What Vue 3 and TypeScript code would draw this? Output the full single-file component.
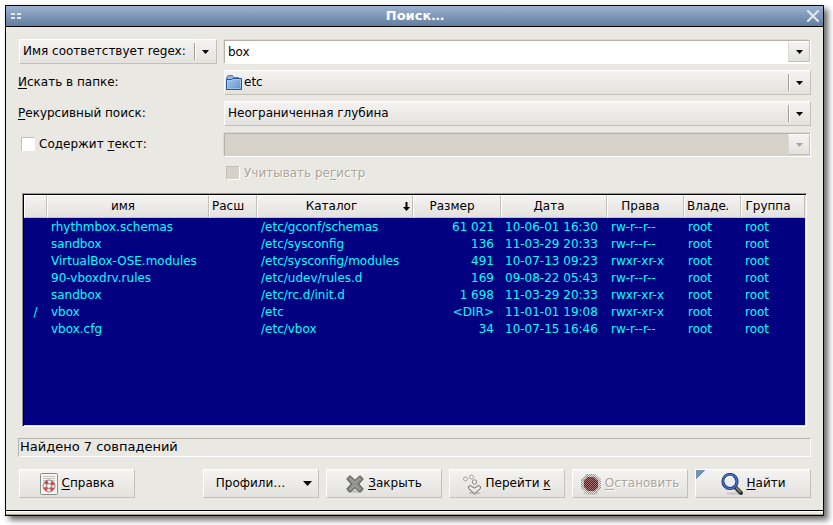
<script setup lang="ts">
import { ref } from 'vue'

interface FoundFile {
  mark: string
  name: string
  ext: string
  dir: string
  size: string
  date: string
  rights: string
  owner: string
  group: string
}

interface Column {
  id: keyof FoundFile
  title: string
  sorted?: boolean
}

const columns: Column[] = [
  { id: 'mark', title: '' },
  { id: 'name', title: 'имя' },
  { id: 'ext', title: 'Расш' },
  { id: 'dir', title: 'Каталог', sorted: true },
  { id: 'size', title: 'Размер' },
  { id: 'date', title: 'Дата' },
  { id: 'rights', title: 'Права' },
  { id: 'owner', title: 'Владел' },
  { id: 'group', title: 'Группа' },
]

const file = (mark: string, name: string, dir: string, size: string, date: string, rights: string): FoundFile => ({
  mark, name, ext: '', dir, size, date, rights, owner: 'root', group: 'root',
})

const files: FoundFile[] = [
  file('', 'rhythmbox.schemas', '/etc/gconf/schemas', '61 021', '10-06-01 16:30', 'rw-r--r--'),
  file('', 'sandbox', '/etc/sysconfig', '136', '11-03-29 20:33', 'rw-r--r--'),
  file('', 'VirtualBox-OSE.modules', '/etc/sysconfig/modules', '491', '10-07-13 09:23', 'rwxr-xr-x'),
  file('', '90-vboxdrv.rules', '/etc/udev/rules.d', '169', '09-08-22 05:43', 'rw-r--r--'),
  file('', 'sandbox', '/etc/rc.d/init.d', '1 698', '11-03-29 20:33', 'rwxr-xr-x'),
  file('/', 'vbox', '/etc', '<DIR>', '11-01-01 19:08', 'rwxr-xr-x'),
  file('', 'vbox.cfg', '/etc/vbox', '34', '10-07-15 16:46', 'rw-r--r--'),
]

const pattern = ref('box')
const containsText = ref(false)
const matchCase = ref(false)
const text = ref('')
</script>

<template>
  <main class="window">
    <header class="titlebar">
      <svg class="menu-glyph" width="10" height="6" viewBox="0 0 10 6" aria-hidden="true">
        <path d="M0 0h4v2H0zM6 0h4v2H6zM0 4h4v2H0zM6 4h4v2H6z" fill="#dfe7f1" />
      </svg>
      <h1>Поиск…</h1>
      <button class="close" type="button" aria-label="Закрыть окно">
        <svg width="12" height="12" viewBox="0 0 12 12">
          <path d="M1 1l10 10M11 1L1 11" stroke="#e3eaf3" stroke-width="2" stroke-linecap="square" />
        </svg>
      </button>
    </header>

    <form class="body" @submit.prevent>
      <div class="fields">
        <div class="combo">
          <select aria-label="Способ сравнения имени">
            <option>Имя соответствует regex:</option>
          </select>
          <span class="divider"></span>
          <svg class="arrow" width="7" height="4" viewBox="0 0 7 4"><path d="M0 0h7L3.5 4z" /></svg>
        </div>
        <div class="entry">
          <input v-model="pattern" type="text" aria-label="Шаблон имени" />
          <button type="button" aria-label="История шаблонов">
            <svg width="7" height="4" viewBox="0 0 7 4"><path d="M0 0h7L3.5 4z" /></svg>
          </button>
        </div>

        <label for="folder"><u>И</u>скать в папке:</label>
        <div class="combo folder">
          <select id="folder"><option>etc</option></select>
          <svg class="folder-icon" width="16" height="16" viewBox="0 0 16 16">
            <defs>
              <linearGradient id="folderFill" x1="0" y1="0" x2="1" y2="1">
                <stop offset="0" stop-color="#a9c8ea" />
                <stop offset="1" stop-color="#5f94cf" />
              </linearGradient>
            </defs>
            <path d="M.5 13.5V3L2 .5h4.500L8 2.500h4.500V5" fill="#8fb4de" stroke="#5280b5" />
            <path d="M.5 14.500V4.500h5l1.500-1h8.500v11z" fill="url(#folderFill)" stroke="#24559a" />
            <path d="M1.500 13.500v-8H6l1.500-1h7v9z" fill="none" stroke="#c2daf3" stroke-opacity=".5" />
          </svg>
          <span class="divider"></span>
          <svg class="arrow" width="7" height="4" viewBox="0 0 7 4"><path d="M0 0h7L3.500 4z" /></svg>
        </div>

        <label for="depth"><u>Р</u>екурсивный поиск:</label>
        <div class="combo">
          <select id="depth"><option>Неограниченная глубина</option></select>
          <span class="divider"></span>
          <svg class="arrow" width="7" height="4" viewBox="0 0 7 4"><path d="M0 0h7L3.500 4z" /></svg>
        </div>

        <label class="check"><input v-model="containsText" type="checkbox" /><span>Содержит <u>т</u>екст:</span></label>
        <div class="entry off">
          <input v-model="text" type="text" aria-label="Искомый текст" disabled />
          <button type="button" aria-label="История текста" disabled>
            <svg width="7" height="4" viewBox="0 0 7 4"><path d="M0 0h7L3.500 4z" /></svg>
          </button>
        </div>
      </div>

      <label class="check case off"><input v-model="matchCase" type="checkbox" disabled /><span>Учитывать ре<u>г</u>истр</span></label>

      <div class="results">
        <table>
          <colgroup>
            <col v-for="c in columns" :key="c.id" :class="'w-' + c.id" />
          </colgroup>
          <thead>
            <tr>
              <th v-for="c in columns" :key="c.id" scope="col">
                <button type="button" :class="'h-' + c.id" :aria-label="c.title ? undefined : 'Тип'">
                  <span class="caption">{{ c.title }}</span>
                  <svg v-if="c.sorted" width="7" height="9" viewBox="0 0 7 9">
                    <path d="M2.500 0h2v5H7L3.500 9 0 5h2.500z" />
                  </svg>
                </button>
              </th>
            </tr>
          </thead>
          <tbody>
            <tr v-for="(f, i) in files" :key="i">
              <td v-for="c in columns" :key="c.id" :class="'c-' + c.id">{{ f[c.id] }}</td>
            </tr>
          </tbody>
        </table>
      </div>

      <output class="status">Найдено 7 совпадений</output>

      <div class="actions">
        <button class="push help" type="button">
          <svg width="18" height="22" viewBox="0 0 18 22">
            <rect x=".5" y=".5" width="17" height="21" rx="1" fill="#f5f5f3" stroke="#8a8c88" />
            <path d="M3 3.500h12M3 5.500h12M3 7.500h4M11 7.500h4" stroke="#c2c3bf" />
            <circle cx="9" cy="13" r="4.200" fill="none" stroke="#ededeb" stroke-width="3.600" />
            <circle cx="9" cy="13" r="4.200" fill="none" stroke="#e04545" stroke-width="3.400" stroke-dasharray="3.300 3.300" stroke-dashoffset="-1.650" />
            <circle cx="9" cy="13" r="6" fill="none" stroke="#8f7a78" stroke-width=".9" />
            <circle cx="9" cy="13" r="2.400" fill="#fff" stroke="#8f6a68" stroke-width=".9" />
          </svg>
          <span><u>С</u>правка</span>
        </button>

        <button class="push profiles" type="button">
          <span>Профили…</span>
          <svg width="9" height="5" viewBox="0 0 9 5"><path d="M0 0h9L4.500 5z" /></svg>
        </button>

        <button class="push" type="button">
          <svg width="18" height="18" viewBox="0 0 18 18">
            <ellipse cx="9" cy="16.500" rx="8" ry="1.500" fill="#000" fill-opacity=".15" />
            <path d="M4 1L9 5.500 14 1l3 3-4.500 5 4.500 5-3 3-5-4.500L4 17l-3-3 4.500-5L1 4z" fill="#8f918c" stroke="#666964" stroke-width="1.200" stroke-linejoin="round" />
            <path d="M4 3l5 4.500L14 3M4 15l5-4.500 5 4.500" fill="none" stroke="#acaeaa" stroke-width=".8" />
          </svg>
          <span><u>З</u>акрыть</span>
        </button>

        <button class="push" type="button">
          <svg width="18" height="22" viewBox="1 0 18 22">
            <ellipse cx="12.500" cy="20" rx="6" ry="1.500" fill="#000" fill-opacity=".16" />
            <g fill="#f3f3f1" stroke="#a4a6a2">
              <circle cx="3.500" cy="6" r="2" />
              <circle cx="9.500" cy="4" r="2" />
              <circle cx="12.500" cy="9" r="2.200" stroke="#858783" />
              <path d="M6.500 13.500L8.500 12.500l4 2.500 4-2.500 2 1v2l-6 5.500-6-5.500z" stroke="#70736e" stroke-linejoin="round" fill="#dcddda" />
              <path d="M8 14.500l4.500 3 4.500-3" fill="none" stroke="#fff" />
            </g>
          </svg>
          <span>Перейти <u>к</u></span>
        </button>

        <button class="push off" type="button" disabled>
          <svg width="20" height="22" viewBox="0 0 20 22">
            <defs>
              <pattern id="stipple" width="2" height="2" patternUnits="userSpaceOnUse">
                <path d="M0 0h1v1H0zM1 1h1v1H1z" fill="#eceae6" />
              </pattern>
              <pattern id="stippleDark" width="2" height="2" patternUnits="userSpaceOnUse">
                <path d="M0 0h1v1H0zM1 1h1v1H1z" fill="#a8a4a0" />
              </pattern>
            </defs>
            <ellipse cx="10" cy="20.500" rx="8" ry="1.500" fill="#000" fill-opacity=".12" />
            <path d="M6 1h8l6 6v8l-6 6H6l-6-6V7z" fill="#8d8f8b" />
            <path d="M6 1h8l6 6v8l-6 6H6l-6-6V7z" fill="url(#stipple)" />
            <path d="M7 4h6l4 4v6l-4 4H7l-4-4V8z" fill="#9a0012" />
            <path d="M7 4h6l4 4v6l-4 4H7l-4-4V8z" fill="url(#stippleDark)" fill-opacity=".7" />
          </svg>
          <span><u>О</u>становить</span>
        </button>

        <button class="push default" type="submit">
          <svg width="22" height="22" viewBox="0 0 22 22">
            <ellipse cx="13" cy="20.500" rx="8" ry="1.300" fill="#000" fill-opacity=".12" />
            <path d="M14.500 14.500l5.500 5.500" stroke="#343632" stroke-width="4" stroke-linecap="round" />
            <path d="M14.500 14l5 5" stroke="#8e918b" stroke-width="1.200" />
            <circle cx="9" cy="8.500" r="7" fill="#e6edf7" stroke="#1f3574" stroke-width="3.200" />
            <circle cx="9" cy="8.500" r="7" fill="none" stroke="#4f72c4" stroke-width="1.400" />
            <path d="M4.500 9a4.500 4.500 0 0 1 7-4.500" fill="none" stroke="#fff" stroke-width="1.800" />
          </svg>
          <span><u>Н</u>айти</span>
        </button>
      </div>
    </form>
    <div class="grip"></div>
  </main>
</template>

<style>
body {
  background: #fff;
}
</style>

<style scoped>
.window,
.window * {
  box-sizing: border-box;
}
.window {
  display: flex;
  flex-direction: column;
  min-height: calc(100vh - 14px);
  margin: 5px 9px 9px 5px;
  border: 1px solid #000;
  background: #e9e8e3;
  box-shadow: 4px 4px 6px rgba(0, 0, 0, 0.6);
  color: #000;
  font: 12px/17px "DejaVu Sans", sans-serif;
}
button,
input,
select {
  margin: 0;
  border-radius: 0;
  color: inherit;
  font: inherit;
}
u {
  text-underline-offset: 2px;
  text-decoration-thickness: 1px;
}
svg {
  display: block;
  flex: none;
}

.titlebar {
  display: grid;
  grid-template-columns: 1fr auto 1fr;
  align-items: center;
  height: 21px;
  padding: 0 4px 0 5px;
  border-bottom: 1px solid #000;
  background: linear-gradient(#9db3cf, #627d9f);
}
h1 {
  margin: 0;
  color: #fff;
  font-size: 13px;
  line-height: 18px;
}
.close {
  justify-self: end;
  padding: 0;
  border: 0;
  background: none;
}

.body {
  display: flex;
  flex: 1;
  flex-direction: column;
  padding: 12px;
}
.fields {
  display: grid;
  grid-template-columns: 199px 1fr;
  grid-auto-rows: 25px;
  align-items: center;
  gap: 6px;
}
.combo,
.entry {
  display: grid;
  align-items: center;
  height: 25px;
}
.combo {
  grid-template-columns: 1fr 1px 21px;
  margin-left: 1px;
  border: 1px solid;
  border-color: #fff #c3c0b8 #c3c0b8 #fff;
  background: linear-gradient(#f4f3f2, #e4e2de);
}
.combo > * {
  grid-row: 1;
  pointer-events: none;
}
.combo select {
  grid-column: 1 / -1;
  width: 100%;
  height: 23px;
  padding: 0 3px;
  border: 0;
  background: none;
  appearance: none;
  outline: 0;
  pointer-events: auto;
}
.combo.folder select {
  padding-left: 19px;
}
.folder-icon {
  grid-column: 1;
  margin-left: 1px;
}
.divider {
  grid-column: 2;
  width: 2px;
  height: 17px;
  border-left: 1px solid #a49e90;
  border-right: 1px solid #fff;
}
.arrow {
  grid-column: 3;
  justify-self: center;
}
.entry {
  grid-template-columns: 1fr 22px;
  border: 1px solid;
  border-color: #dddad3 #fff #fff #dddad3;
  background: #fff;
  box-shadow: inset 1px 1px #b6b2a7;
}
.entry input {
  min-width: 0;
  height: 21px;
  padding: 0 4px;
  border: 0;
  background: none;
  outline: 0;
}
.entry button {
  display: grid;
  place-items: center;
  height: 21px;
  padding: 0;
  border: 1px solid;
  border-color: #fff #c3c0b8 #c3c0b8 #dddad3;
  background: linear-gradient(#f4f3f2, #e4e2de);
}
.entry.off {
  background: #d6d1c9;
}
.entry.off path {
  fill: #aca59a;
}

.check {
  display: flex;
  align-items: center;
  align-self: start;
  gap: 4px;
  height: 24px;
  padding-left: 3px;
}
.check input {
  width: 14px;
  height: 14px;
  border: 1px solid;
  border-color: #c3c0b8 #fff #fff #c3c0b8;
  background: #fff;
  appearance: none;
}
.check input:checked {
  background: #627d9f;
}
.check.case {
  height: 20px;
  margin: 6px 0 10px 205px;
}
.case input {
  background: #d6d1c9;
}
.off {
  color: #aca59a;
  text-shadow: 1px 1px #fff;
}

.results {
  flex: 1;
  min-height: 160px;
  margin: 0 4px;
  border: 1px solid;
  border-color: #9c988c #fff #fff #9c988c;
  background: #000080;
  box-shadow: inset 1px 1px #000, inset -1px -1px #e4e2de;
  padding: 1px;
  overflow: hidden;
}
table {
  width: 100%;
  border-collapse: collapse;
  table-layout: fixed;
  color: #00ffff;
}
.w-mark { width: 23px; }
.w-name { width: 162px; }
.w-ext { width: 48px; }
.w-size { width: 88px; }
.w-date { width: 106px; }
.w-rights { width: 77px; }
.w-owner { width: 57px; }
.w-group { width: 64px; }
th {
  height: 23px;
  padding: 0;
  color: #000;
  font-weight: normal;
}
th button {
  display: flex;
  align-items: center;
  width: 100%;
  height: 23px;
  padding: 0 12px 0 2px;
  border: 1px solid;
  border-color: #fff #c3c0b8 #c3c0b8 #fff;
  background: linear-gradient(#f4f3f2, #e4e2de);
}
th .h-dir {
  padding-right: 2px;
}
.caption {
  flex: 1;
  overflow: hidden;
  white-space: nowrap;
}
th .h-ext,
th .h-mark {
  padding-right: 2px;
}
.h-ext .caption,
.h-owner .caption {
  text-align: left;
}
td {
  height: 17px;
  padding: 2px 4px 0;
  line-height: 15px;
  white-space: nowrap;
}
.c-mark {
  text-align: center;
}
.c-size {
  padding-right: 7px;
  text-align: right;
}

.status {
  display: block;
  height: 19px;
  margin-top: 11px;
  padding: 0 1px;
  border: 1px solid;
  border-color: #b6b2a7 #fff #fff #b6b2a7;
  font-size: 13px;
  line-height: 15px;
}

.actions {
  display: flex;
  gap: 7px;
  margin: 12px 0 0 1px;
}
.push {
  display: flex;
  align-items: center;
  justify-content: center;
  gap: 4px;
  width: 116px;
  height: 29px;
  padding: 0;
  border: 1px solid;
  border-color: #fff #c3c0b8 #c3c0b8 #fff;
  background: linear-gradient(#f4f3f2, #e4e2de);
  white-space: nowrap;
}
.push.help {
  margin-right: auto;
}
.push.profiles {
  gap: 18px;
  padding-left: 6px;
}
.push.default {
  background: linear-gradient(135deg, #7590b1 7px, transparent 7px), linear-gradient(#f4f3f2, #e4e2de);
}

.grip {
  height: 5px;
  border-top: 1px solid #000;
  border-bottom: 1px solid #aaa698;
  box-shadow: inset 0 1px #fff;
}
</style>
